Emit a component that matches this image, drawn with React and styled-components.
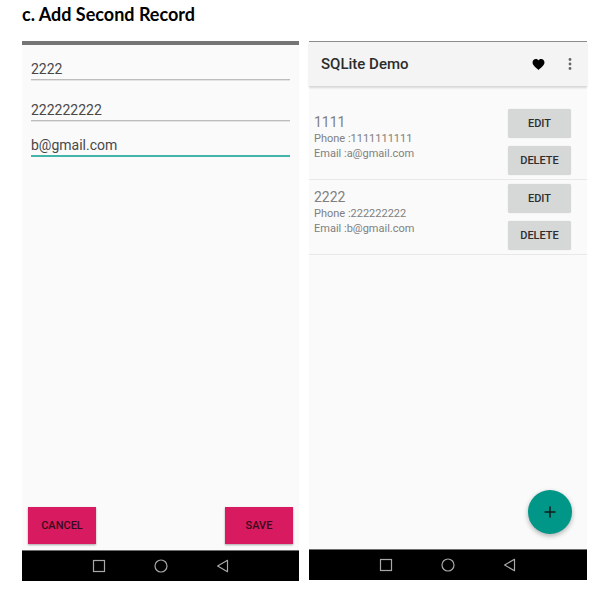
import React from "react";
import styled, { createGlobalStyle } from "styled-components";

const GlobalStyle = createGlobalStyle`
  *, *::before, *::after { box-sizing: border-box; }
  body { margin: 0; background: #fff; font-family: Roboto, "Liberation Sans", sans-serif; }
  button, input { font-family: inherit; }
`;

const Page = styled.main`
  display: flex;
  flex-direction: column;
  min-height: 100vh;
  padding: 4px 17px 11px 22px;
`;

const Heading = styled.h1`
  margin: 0;
  height: 37px;
  font: 700 18px/20px Lato, "Open Sans", sans-serif;
  color: #000;
`;

const Screens = styled.div`
  flex: 1;
  display: grid;
  grid-template-columns: 277fr 278fr;
  gap: 10px;
`;

const Phone = styled.section`
  display: flex;
  flex-direction: column;
  min-width: 0;
  background: #fafafa;
  border-top: ${(p) => (p.$thickBar ? "4px solid #757575" : "1px solid #8e8e8e")};
  margin-bottom: ${(p) => (p.$thickBar ? "0" : "1px")};
`;

const Form = styled.form`
  flex: 1;
  display: flex;
  flex-direction: column;
  padding: 12px 9px 6px;
`;

const Field = styled.input`
  width: 100%;
  height: ${(p) => (p.$active ? "24px" : "23px")};
  margin: 0 0 ${(p) => (p.$spaced ? "18px" : "12px")};
  padding: ${(p) => (p.$active ? "2px" : "1px")} 0 0;
  border: 0;
  border-bottom: ${(p) => (p.$active ? "2px solid #45b5aa" : "1px solid #bdbdbd")};
  box-shadow: ${(p) => (p.$active ? "none" : "0 1px #e4e4e4")};
  background: transparent;
  color: #484848;
  font-size: 14px;
  line-height: 20px;
  outline: 0;
`;

const FormActions = styled.div`
  display: flex;
  justify-content: space-between;
  margin: auto -3px 0;
`;

const FormButton = styled.button`
  width: 68px;
  height: 37px;
  padding: 0;
  border: 0;
  background: #d81b60;
  box-shadow: 0 1px 2px rgba(0, 0, 0, 0.35);
  color: #3a0a1c;
  font-size: 11px;
  font-weight: 500;
`;

const NavBar = styled.nav`
  display: flex;
  justify-content: center;
  align-items: center;
  gap: 46px;
  height: 31px;
  background: #000;
  border-top: 1px solid #6e6e6e;
`;

const NavButton = styled.button`
  display: flex;
  width: 16px;
  height: 16px;
  padding: 0;
  border: 0;
  background: transparent;
  color: #a8a8a8;
`;

const AppBar = styled.header`
  display: flex;
  align-items: center;
  height: 45px;
  padding: 0 9px 0 12px;
  background: #f4f4f4;
  border-bottom: 1px solid #dadada;
  box-shadow: 0 1px 2px rgba(0, 0, 0, 0.14);
`;

const AppTitle = styled.h2`
  flex: 1;
  margin: 0;
  color: #2c2c2c;
  font-size: 15px;
  line-height: 20px;
  font-weight: 500;
`;

const IconButton = styled.button`
  display: flex;
  justify-content: center;
  align-items: center;
  width: 16px;
  height: 16px;
  margin-left: 16px;
  padding: 0;
  border: 0;
  background: transparent;
`;

const Content = styled.div`
  flex: 1;
  display: flex;
  flex-direction: column;
  padding: 18px 0 15px;
`;

const List = styled.ul`
  margin: 0;
  padding: 0;
  list-style: none;
`;

const Row = styled.li`
  display: flex;
  justify-content: space-between;
  height: 75px;
  padding: 4px 16px 0 5px;
  border-bottom: 1px solid #e8e8e8;
`;

const Details = styled.div`
  padding-top: 4px;
  color: #808080;
  font-size: 11px;
  line-height: 15px;
`;

const Name = styled.div`
  font-size: 14px;
  line-height: 18px;
`;

const RowActions = styled.div`
  display: flex;
  flex-direction: column;
  gap: 8px;
`;

const RowButton = styled.button`
  width: 63px;
  height: 29px;
  padding: 0;
  border: 0;
  border-radius: 2px;
  background: #d6d7d7;
  box-shadow: 0 0 1px rgba(0, 0, 0, 0.2);
  color: #2e2e2e;
  font-size: 11px;
  font-weight: 500;
`;

const AddButton = styled.button`
  display: flex;
  justify-content: center;
  align-items: center;
  width: 44px;
  height: 44px;
  margin: auto 15px 0 auto;
  padding: 0;
  border: 0;
  border-radius: 50%;
  background: #009688;
  box-shadow: 0 2px 5px rgba(0, 0, 0, 0.3);
`;

const records = [
  { name: "1111", phone: "1111111111", email: "a@gmail.com" },
  { name: "2222", phone: "222222222", email: "b@gmail.com" },
];

function SystemNav() {
  const stroke = { fill: "none", stroke: "currentColor", strokeWidth: 1.2 };
  return (
    <NavBar aria-label="System navigation">
      <NavButton aria-label="Recent apps">
        <svg width="16" height="16" viewBox="0 0 16 16"><rect x="2.500" y="2.500" width="11" height="11" {...stroke} /></svg>
      </NavButton>
      <NavButton aria-label="Home">
        <svg width="16" height="16" viewBox="0 0 16 16"><circle cx="8" cy="8" r="6" {...stroke} /></svg>
      </NavButton>
      <NavButton aria-label="Back">
        <svg width="16" height="16" viewBox="0 0 16 16"><path d="M12.5 2.3v11.4L2.600 8z" strokeLinejoin="round" {...stroke} /></svg>
      </NavButton>
    </NavBar>
  );
}

export default function App() {
  return (
    <>
      <GlobalStyle />
      <Page>
        <Heading>c. Add Second Record</Heading>
        <Screens>
          <Phone $thickBar>
            <Form onSubmit={(e) => e.preventDefault()}>
              <Field aria-label="Name" defaultValue="2222" $spaced />
              <Field aria-label="Phone" defaultValue="222222222" />
              <Field aria-label="Email" defaultValue="b@gmail.com" $active />
              <FormActions>
                <FormButton type="button">CANCEL</FormButton>
                <FormButton type="submit">SAVE</FormButton>
              </FormActions>
            </Form>
            <SystemNav />
          </Phone>
          <Phone>
            <AppBar>
              <AppTitle>SQLite Demo</AppTitle>
              <IconButton aria-label="Favourite">
                <svg width="13" height="13" viewBox="0 0 24 24" fill="#000">
                  <path d="M12 22C9 19 1 14 1 8.200C1 4.500 3.700 2 7 2C9.300 2 11.200 3 12 4.800C12.800 3 14.700 2 17 2C20.300 2 23 4.500 23 8.200C23 14 15 19 12 22Z" />
                </svg>
              </IconButton>
              <IconButton aria-label="More options">
                <svg width="4" height="14" viewBox="0 0 4 14" fill="#666">
                  <circle cx="2" cy="2.500" r="1.400" /><circle cx="2" cy="7" r="1.400" /><circle cx="2" cy="11.500" r="1.400" />
                </svg>
              </IconButton>
            </AppBar>
            <Content>
              <List>
                {records.map((r) => (
                  <Row key={r.name}>
                    <Details>
                      <Name>{r.name}</Name>
                      <div>Phone :{r.phone}</div>
                      <div>Email :{r.email}</div>
                    </Details>
                    <RowActions>
                      <RowButton>EDIT</RowButton>
                      <RowButton>DELETE</RowButton>
                    </RowActions>
                  </Row>
                ))}
              </List>
              <AddButton aria-label="Add record">
                <svg width="12" height="12" viewBox="0 0 12 12" stroke="#0b1f1d" strokeWidth="1.600"><path d="M6 0.500v11M0.500 6h11" /></svg>
              </AddButton>
            </Content>
            <SystemNav />
          </Phone>
        </Screens>
      </Page>
    </>
  );
}
